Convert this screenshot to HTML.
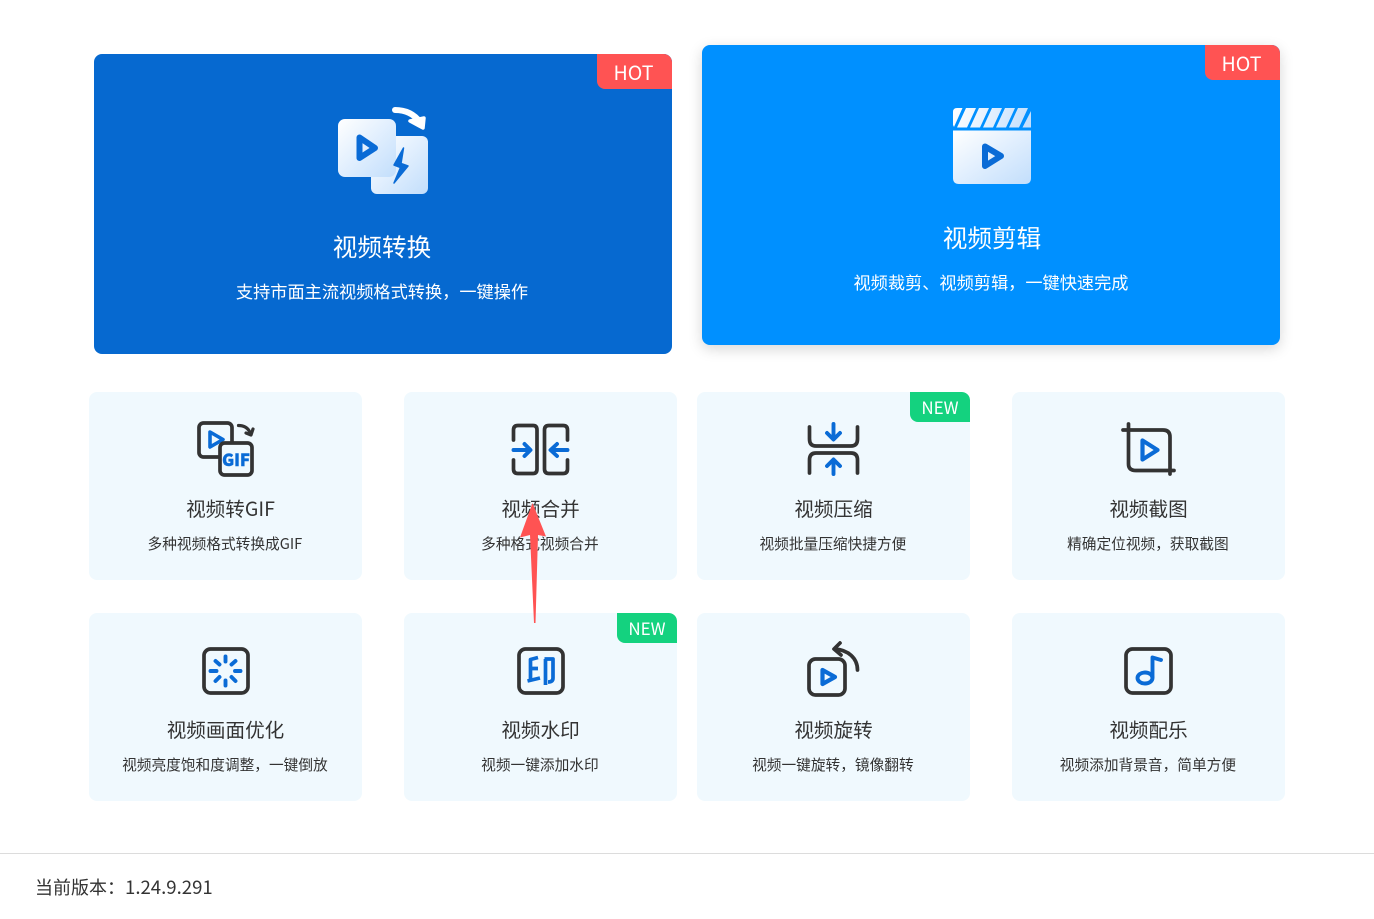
<!DOCTYPE html>
<html lang="zh"><head><meta charset="utf-8"><style>
*{margin:0;padding:0;box-sizing:border-box}
html,body{width:1374px;height:919px;overflow:hidden;background:#fff}
body{position:relative;font-family:"Noto Sans CJK SC","Liberation Sans",sans-serif;color:#333}
.big{position:absolute;width:578px;height:300px;border-radius:8px;color:#fff;overflow:hidden}
.c{position:absolute;width:273px;height:188px;background:#f0f9fe;border-radius:8px;overflow:hidden}
.t,.s,.bt,.bs{position:absolute;left:0;width:100%;text-align:center;white-space:nowrap}
.bt{top:175px;font-size:24.6px;line-height:34px}
.bs{top:225px;font-size:17.2px;line-height:24px}
.t{top:102px;font-size:19.6px;line-height:28px;color:#333}
.s{top:142px;left:-.6px;font-size:14.7px;line-height:20px;color:#333}
.tag{position:absolute;right:0;top:0;color:#fff;text-align:center}
.hot{width:75px;height:35px;background:#ff5353;border-radius:0 8px 0 8px;font-size:19.6px;line-height:35px;padding-right:2px}
.new{width:60px;height:30px;background:#14d27f;border-radius:0 8px 0 8px;font-size:17px;line-height:30px}
svg{position:absolute;overflow:visible}
.k{fill:none;stroke:#333;stroke-width:3.7;stroke-linecap:round;stroke-linejoin:round}
.b{fill:none;stroke:#0a6bd6;stroke-width:3.9;stroke-linecap:round;stroke-linejoin:round}
#foot{position:absolute;left:0;top:853px;width:1374px;height:1px;background:#dcdcdc}
#ver{position:absolute;left:35px;top:874px;font-size:18px;line-height:26px;color:#333}
#ver span{font-size:18.6px}
</style></head><body>

<svg width="0" height="0" style="position:absolute"><defs>
<linearGradient id="g" x1="0" y1="0" x2="1" y2="1"><stop offset="0" stop-color="#fff"/><stop offset="1" stop-color="#c2defc"/></linearGradient>
<linearGradient id="g2" gradientUnits="userSpaceOnUse" x1="953" y1="108" x2="1031" y2="128"><stop offset="0" stop-color="#fff"/><stop offset="1" stop-color="#c2defc"/></linearGradient>
</defs></svg>

<div class="big" style="left:94px;top:54px;background:#0669d0">
<div class="tag hot">HOT</div>
<div class="bt" style="left:-1px">视频转换</div>
<div class="bs" style="left:-1px">支持市面主流视频格式转换，一键操作</div>
</div>
<svg style="left:0;top:0" width="1374" height="400">
<path d="M395 110C406 110 414 114 420 122" fill="none" stroke="#fff" stroke-width="6" stroke-linecap="round"/>
<path d="M410 121L424 118L423 128Z" fill="#fff" stroke="#fff" stroke-width="3.500" stroke-linejoin="round"/>
<rect x="371" y="136" width="57" height="58" rx="6" fill="url(#g)"/>
<rect x="338" y="119" width="58" height="58" rx="7" fill="url(#g)"/>
<path d="M359.500 137.500L375 148L359.500 158Z" fill="none" stroke="#0a6bd6" stroke-width="6" stroke-linejoin="round"/>
<path d="M403.500 148L394 165L400.500 167.500L394 183L408 166L401 163.500Z" fill="#0a6bd6" stroke="#0a6bd6" stroke-width="1.500" stroke-linejoin="round"/>
</svg>

<div class="big" style="left:702px;top:45px;background:#0090ff;box-shadow:0 4px 14px rgba(0,0,0,.16);overflow:visible">
<div style="position:absolute;inset:0;border-radius:8px;overflow:hidden"><div class="tag hot">HOT</div></div>
<div class="bt" style="left:1px">视频剪辑</div>
<div class="bs">视频裁剪、视频剪辑，一键快速完成</div>
</div>
<svg style="left:0;top:0;z-index:2" width="1374" height="400">
<path d="M953 125V112Q953 108 957 108H962.500L954 127Z" fill="url(#g2)"/>
<path d="M966 108H976L967 127.500H957ZM979 108H989L980 127.500H970ZM992 108H1002L993 127.500H983ZM1005 108H1015L1006 127.500H996ZM1018 108H1028L1019 127.500H1009ZM1031 111V127.500H1022.500Z" fill="url(#g2)"/>
<path d="M953 130.500H1031V178Q1031 184 1025 184H959Q953 184 953 178Z" fill="url(#g)"/>
<path d="M985 146.500L1001 156L985 166Z" fill="none" stroke="#0a6bd6" stroke-width="6" stroke-linejoin="round"/>
</svg>

<div class="c" style="left:89px;top:392px"><div class="t" style="left:5px">视频转GIF</div><div class="s">多种视频格式转换成GIF</div>
<svg style="left:0;top:0" width="273" height="188" viewBox="89 392 273 188">
<rect x="199" y="423" width="33" height="34" rx="4.500" class="k"/>
<path d="M210 432L223 439.500L210 447Z" fill="none" stroke="#0a6bd6" stroke-width="3.600" stroke-linejoin="round"/>
<rect x="220" y="443" width="32" height="32" rx="4.500" fill="#f0f9fe" stroke="#333" stroke-width="3.700"/>
<text x="236" y="466" text-anchor="middle" font-size="16.500" font-weight="900" fill="#0a6bd6" stroke="#0a6bd6" stroke-width=".4" font-family="Noto Sans CJK SC,sans-serif">GIF</text>
<path d="M238.500 425.500C244 425.500 248 428 250 432.500" fill="none" stroke="#333" stroke-width="3.200" stroke-linecap="round"/>
<path d="M246 433L251 435L253 429" fill="none" stroke="#333" stroke-width="3.200" stroke-linecap="round" stroke-linejoin="round"/>
</svg></div>

<div class="c" style="left:404px;top:392px"><div class="t">视频合并</div><div class="s">多种格式视频合并</div>
<svg style="left:0;top:0" width="273" height="188" viewBox="404 392 273 188">
<path class="k" d="M513.500 440V430Q513.500 425.500 518 425.500H533Q537 425.500 537 430V469Q537 473.500 533 473.500H518Q513.500 473.500 513.500 469V460"/>
<path class="k" d="M567.500 440V430Q567.500 425.500 563 425.500H549Q544.500 425.500 544.500 430V469Q544.500 473.500 549 473.500H563Q567.500 473.500 567.500 469V460"/>
<path class="b" d="M513.500 450H530M524.500 444L530.500 450L524.500 456"/>
<path class="b" d="M567.500 450H551M557 444L550.500 450L557 456"/>
</svg></div>

<div class="c" style="left:697px;top:392px"><div class="tag new">NEW</div><div class="t">视频压缩</div><div class="s">视频批量压缩快捷方便</div>
<svg style="left:0;top:0" width="273" height="188" viewBox="697 392 273 188">
<path class="k" d="M809.500 427V439Q809.500 446 816 446H851Q857.500 446 857.500 439V427"/>
<path class="k" d="M809.500 473V460Q809.500 453 816 453H851Q857.500 453 857.500 460V473"/>
<path class="b" d="M833.500 424V439M827 433L833.500 439.500L840 433"/>
<path class="b" d="M833.500 474V460M827 466L833.500 459.500L840 466"/>
</svg></div>

<div class="c" style="left:1012px;top:392px"><div class="t">视频截图</div><div class="s">精确定位视频，获取截图</div>
<svg style="left:0;top:0" width="273" height="188" viewBox="1012 392 273 188">
<path class="k" d="M1123 430H1163Q1170 430 1170 437V474M1128.500 424V464Q1128.500 470.500 1136 470.500H1174"/>
<path d="M1142.500 440.500L1157.500 450L1142.500 459.500Z" fill="none" stroke="#0a6bd6" stroke-width="4.200" stroke-linejoin="round"/>
</svg></div>

<div class="c" style="left:89px;top:613px"><div class="t">视频画面优化</div><div class="s">视频亮度饱和度调整，一键倒放</div>
<svg style="left:0;top:0" width="273" height="188" viewBox="89 613 273 188">
<rect x="204" y="649" width="44" height="44" rx="6.500" class="k"/>
<path class="b" d="M225.500 656.500V661.500M225.500 680.500V685.500M210.500 671H216.500M235 671H240.500M215.500 661L219.500 664.500M235.500 661L231.500 664.500M215.500 681L219.500 677M235.500 681L231.500 677"/>
</svg></div>

<div class="c" style="left:404px;top:613px"><div class="tag new">NEW</div><div class="t">视频水印</div><div class="s">视频一键添加水印</div>
<svg style="left:0;top:0" width="273" height="188" viewBox="404 613 273 188">
<rect x="519" y="649" width="44" height="44" rx="6.500" class="k"/>
<path d="M538 657.500L530.500 659.500V680M527.500 681L540 678M531 668.500H538M544.500 659H553V678Q553 682 548 682M545.500 659V685" fill="none" stroke="#0a6bd6" stroke-width="3.700" stroke-linejoin="round"/>
</svg></div>

<div class="c" style="left:697px;top:613px"><div class="t">视频旋转</div><div class="s">视频一键旋转，镜像翻转</div>
<svg style="left:0;top:0" width="273" height="188" viewBox="697 613 273 188">
<rect x="809" y="659" width="36" height="36" rx="6.500" class="k"/>
<path d="M822.500 670L835 677L822.500 684Z" fill="none" stroke="#0a6bd6" stroke-width="4.200" stroke-linejoin="round"/>
<path class="k" d="M857.500 670C857.500 658 848 650 835 649M840 643L834 649L841 655"/>
</svg></div>

<div class="c" style="left:1012px;top:613px"><div class="t">视频配乐</div><div class="s">视频添加背景音，简单方便</div>
<svg style="left:0;top:0" width="273" height="188" viewBox="1012 613 273 188">
<rect x="1126" y="649" width="45" height="44" rx="6.500" class="k"/>
<ellipse cx="1145" cy="678" rx="7.500" ry="5.500" class="b"/>
<path class="b" d="M1152.500 677V657.500L1161 660"/>
</svg></div>

<svg style="left:0;top:0;z-index:5" width="1374" height="919">
<path d="M532.500 503L546 536.500L538 535L535.500 623H534L530 535L520 537.500Z" fill="#ff5353"/>
</svg>

<div id="foot"></div>
<div id="ver">当前版本：<span>1.24.9.291</span></div>
</body></html>
